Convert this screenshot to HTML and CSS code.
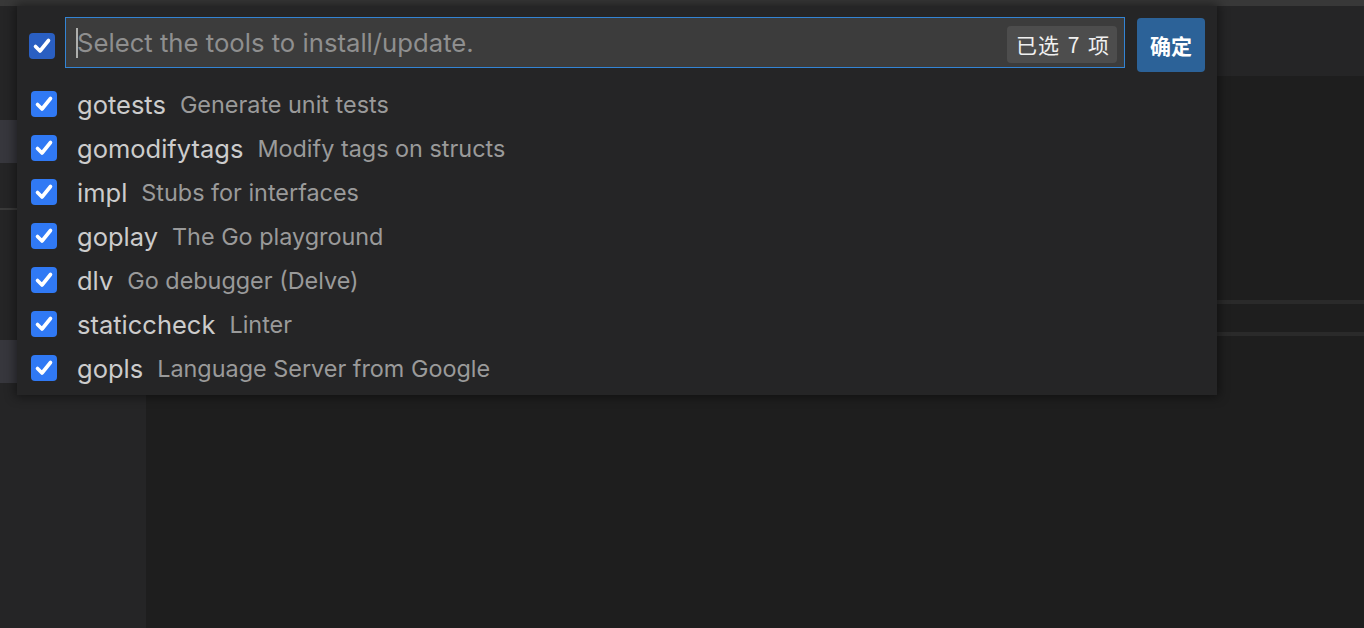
FILE: index.html
```html
<!DOCTYPE html>
<html lang="zh">
<head>
<meta charset="utf-8">
<title>Go tools</title>
<link rel="stylesheet" href="styles.css">
</head>
<body>
<div class="titlebar"></div>
<div class="workbench">
  <aside class="sidebar">
    <div class="side-space s1"></div>
    <div class="side-item"></div>
    <div class="side-space s2"></div>
    <div class="side-line"></div>
    <div class="side-space s3"></div>
    <div class="side-item"></div>
  </aside>
  <main class="editor">
    <div class="tabs"></div>
    <div class="editor-body"></div>
    <div class="stripe"></div>
    <div class="panel-head"></div>
    <div class="stripe"></div>
    <div class="panel-body"></div>
  </main>
</div>

<div class="quick-pick">
  <div class="qp-header">
    <span class="check check-all"><svg viewBox="0 0 26 26"><path d="M6.5 13.5 L11 18 L19.5 7.5"/></svg></span>
    <div class="qp-input">
      <span class="caret"></span>
      <span class="placeholder">Select the tools to install/update.</span>
      <span class="count">已选 7 项</span>
    </div>
    <button class="ok">确定</button>
  </div>
  <ul class="qp-list">
    <li class="row"><span class="check"><svg viewBox="0 0 26 26"><path d="M6.5 13.5 L11 18 L19.5 7.5"/></svg></span><span class="label">gotests</span><span class="desc">Generate unit tests</span></li>
    <li class="row"><span class="check"><svg viewBox="0 0 26 26"><path d="M6.5 13.5 L11 18 L19.5 7.5"/></svg></span><span class="label">gomodifytags</span><span class="desc">Modify tags on structs</span></li>
    <li class="row"><span class="check"><svg viewBox="0 0 26 26"><path d="M6.5 13.5 L11 18 L19.5 7.5"/></svg></span><span class="label">impl</span><span class="desc">Stubs for interfaces</span></li>
    <li class="row"><span class="check"><svg viewBox="0 0 26 26"><path d="M6.5 13.5 L11 18 L19.5 7.5"/></svg></span><span class="label">goplay</span><span class="desc">The Go playground</span></li>
    <li class="row"><span class="check"><svg viewBox="0 0 26 26"><path d="M6.5 13.5 L11 18 L19.5 7.5"/></svg></span><span class="label">dlv</span><span class="desc">Go debugger (Delve)</span></li>
    <li class="row"><span class="check"><svg viewBox="0 0 26 26"><path d="M6.5 13.5 L11 18 L19.5 7.5"/></svg></span><span class="label">staticcheck</span><span class="desc">Linter</span></li>
    <li class="row"><span class="check"><svg viewBox="0 0 26 26"><path d="M6.5 13.5 L11 18 L19.5 7.5"/></svg></span><span class="label">gopls</span><span class="desc">Language Server from Google</span></li>
  </ul>
</div>
</body>
</html>
```
FILE: styles.css
```css
* { box-sizing: border-box; }
html, body {
  margin: 0;
  padding: 0;
  width: 1364px;
  height: 628px;
  overflow: hidden;
  background: #1e1e1e;
  font-family: Inter, "Noto Sans", "Noto Sans CJK SC", sans-serif;
}
.titlebar {
  height: 6px;
  background: #383838;
}
.workbench {
  display: flex;
  height: 622px;
}
.sidebar {
  width: 146px;
  background: #252526;
  display: flex;
  flex-direction: column;
}
.s1 { height: 114px; }
.side-item { height: 43px; background: #37373d; }
.s2 { height: 45px; }
.side-line { height: 2px; background: #3a3a3a; }
.s3 { height: 130px; }
.editor {
  flex: 1;
  display: flex;
  flex-direction: column;
  background: #1e1e1e;
}
.tabs { height: 70px; background: #252526; }
.editor-body { height: 224px; }
.stripe { height: 4px; background: #2a2a2a; }
.panel-head { height: 28px; }
.panel-body { flex: 1; }

.quick-pick {
  position: absolute;
  top: 6px;
  left: 17px;
  width: 1200px;
  height: 389px;
  background: #252526;
  box-shadow: 0 0 10px 2px rgba(0, 0, 0, 0.45);
}
.qp-header {
  display: flex;
  align-items: flex-start;
  padding: 11px 12px 0 12px;
}
.check {
  width: 26px;
  height: 26px;
  border-radius: 4px;
  background: #3079f4;
  display: flex;
  align-items: center;
  justify-content: center;
  flex: none;
}
.check svg { width: 26px; height: 26px; }
.check path {
  fill: none;
  stroke: #ffffff;
  stroke-width: 3.6;
  stroke-linecap: round;
  stroke-linejoin: round;
}
.check-all {
  background: #2a5fc2;
  margin-top: 16px;
}
.qp-input {
  flex: 1;
  margin-left: 10px;
  height: 51px;
  background: #3c3c3c;
  border: 1px solid #3384d4;
  display: flex;
  align-items: center;
  padding: 0 7px 0 10px;
}
.caret {
  width: 2px;
  height: 30px;
  background: #aeafad;
  margin-right: -1px;
}
.placeholder {
  flex: 1;
  font-size: 25.7px;
  color: #8f8f8f;
}
.count {
  background: #4d4d4d;
  color: #f0f0f0;
  font-family: "Noto Sans CJK SC", sans-serif;
  font-size: 21px;
  line-height: 37px;
  height: 37px;
  padding: 0 7px 0 9px;
  border-radius: 4px;
  margin-top: 3px;
  letter-spacing: 1px;
  word-spacing: 2px;
}
.ok {
  margin-left: 12px;
  margin-top: 1px;
  width: 68px;
  height: 54px;
  border: none;
  border-radius: 4px;
  background: #2c6298;
  color: #ffffff;
  font-family: "Noto Sans CJK SC", sans-serif;
  font-size: 21px;
  font-weight: 700;
  padding: 0;
}
.qp-list {
  list-style: none;
  margin: 10px 0 0 0;
  padding: 0;
}
.row {
  display: flex;
  align-items: center;
  height: 44px;
  padding-left: 14px;
}
.label {
  margin-left: 20px;
  font-size: 25.5px;
  color: #cccccc;
}
.desc {
  margin-left: 14px;
  font-size: 23.4px;
  color: #9a9a9a;
}
```
